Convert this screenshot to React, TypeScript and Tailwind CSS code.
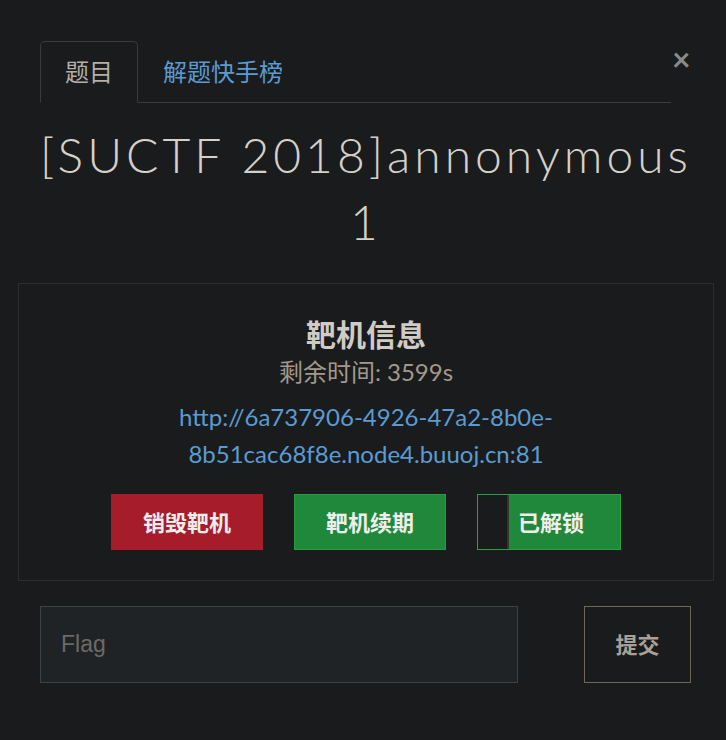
const sans = "font-['Lato','Noto_Sans_CJK_SC',sans-serif]";

export default function App() {
    return (
        <div className={`min-h-[740px] w-[726px] bg-[#1a1b1d] ${sans} pl-[18px] pr-[12px] pt-[41px]`}>

            {/* tabs */}
            <div className="flex items-start pl-[22px]">
                <ul className="flex flex-1 border-b border-[#3a3b3d]">
                    <li className="-mb-px h-[62px] w-[98px] flex items-center justify-center rounded-t-[5px] border border-[#3a3b3d] border-b-[#1a1b1d] text-[24px] text-[#b5afa6]">
                        题目
                    </li>
                    <li className="h-[61px] px-[25px] flex items-center text-[24px] text-[#5b9bd1]">
                        解题快手榜
                    </li>
                </ul>
                <button className="w-[43px] pl-[1px] pt-[2px] text-left text-[32px] leading-none font-bold text-[#8a8a8a]">×</button>
            </div>

            {/* title */}
            <h3 className="mt-[18px] mb-[28px] text-center text-[48px] leading-[67px] font-light tracking-[4px] text-[#d5d1c9] font-['Lato',sans-serif]">
                [SUCTF 2018]annonymous
                <br />1
            </h3>

            {/* instance box */}
            <div className="border border-[#2b2c2e] pt-[29px] pb-[30px] text-center">
                <h4 className="text-[30px] leading-[42px] font-bold text-[#d0ccc5]">靶机信息</h4>
                <p className="text-[24px] leading-[34px] text-[#a2998c]">剩余时间: 3599s</p>
                <a className="block mt-[9px] text-[24px] leading-[37px] text-[#5b9bd1]">
                    http://6a737906-4926-47a2-8b0e-
                    <br />8b51cac68f8e.node4.buuoj.cn:81
                </a>
                <div className="mt-[22px] flex justify-center gap-[31px]">
                    <button className="h-[56px] w-[152px] bg-[#a61c2b] text-[22px] font-bold text-[#eeeeee]">销毁靶机</button>
                    <button className="h-[56px] w-[152px] bg-[#20883a] border border-[#2a9a40] text-[22px] font-bold text-[#eeeeee]">靶机续期</button>
                    <button className="h-[56px] w-[144px] flex bg-[#20883a] border border-[#2aa040] text-[22px] font-bold text-[#eeeeee]">
                        <span className="w-[31px] h-full bg-[#1a1b1d] border-r-2 border-[#2e3a30]" />
                        <span className="flex-1 pl-[9px] flex items-center justify-start">已解锁</span>
                    </button>
                </div>
            </div>

            {/* flag */}
            <div className="mt-[25px] flex justify-between pl-[22px] pr-[23px]">
                <input
                    placeholder="Flag"
                    className="h-[77px] w-[478px] bg-[#202325] border border-[#3d4344] px-[20px] text-[23px] text-[#ccc] placeholder:text-[#6b6a66] font-['Liberation_Sans',sans-serif] outline-none"
                />
                <button className="h-[77px] w-[107px] border border-[#706656] text-[22px] font-bold text-[#a9a197]">提交</button>
            </div>
        </div>
    )
}
